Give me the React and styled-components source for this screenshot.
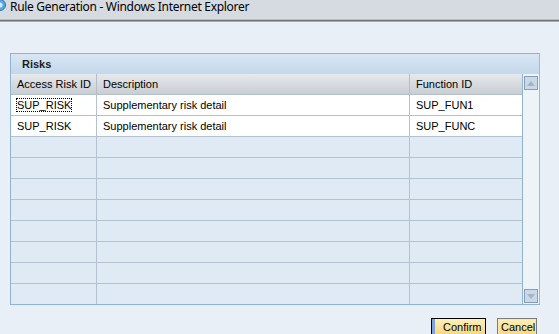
import React from "react";
import styled, { createGlobalStyle } from "styled-components";

const Global = createGlobalStyle`
  html, body { margin: 0; padding: 0; }
  body { width: 559px; height: 334px; overflow: hidden; background: #e8eff7; font-family: "Liberation Sans", Arial, sans-serif; }
`;

const Window = styled.div`
  display: flex;
  flex-direction: column;
  width: 559px;
  height: 334px;
  overflow: hidden;
  background: #e8eff7;
  font-family: "Liberation Sans", Arial, sans-serif;
`;

const TitleBar = styled.div`
  flex-shrink: 0;
  height: 19px;
  display: flex;
  align-items: flex-start;
  gap: 4px;
  background: #d6dbe2;
  font-family: "Noto Sans", "Open Sans", sans-serif;
  font-size: 12px;
  color: #000;
  overflow: hidden;
`;

const TitleText = styled.span`
  line-height: 13px;
  letter-spacing: -0.3px;
  white-space: nowrap;
`;

const Divider = styled.div`
  flex-shrink: 0;
  height: 1px;
  background: ${(p) => p.$c};
`;

const Content = styled.div`
  flex-shrink: 0;
  display: flex;
  flex-direction: column;
  padding: 31px 0 0 10px;
`;

const Panel = styled.div`
  width: 528px;
  border: 1px solid #8fb3d2;
  border-right-color: #a9b9c9;
  display: flex;
  flex-direction: column;
`;

const PanelTitle = styled.div`
  height: 20px;
  line-height: 20px;
  padding-left: 11px;
  font-weight: bold;
  font-size: 11px;
  color: #1c1c1c;
  background: linear-gradient(#d8e6f3, #c3d8eb);
`;

const Body = styled.div`
  display: flex;
`;

const Grid = styled.div`
  display: grid;
  grid-template-columns: 86px 313px 112px;
  border-right: 1px solid #8fb3d2;
`;

const HeadCell = styled.div`
  height: 20px;
  line-height: 20px;
  padding-left: 6px;
  font-size: 11px;
  color: #000;
  white-space: nowrap;
  overflow: hidden;
  background: linear-gradient(#e6e9ec, #c9ced3);
  border-bottom: 1px solid #b4c0cc;
  border-right: ${(p) => (p.$last ? "none" : "1px solid #b4bec8")};
`;

const Cell = styled.div`
  height: 20px;
  line-height: 20px;
  padding-left: 6px;
  font-size: 11px;
  color: #000;
  white-space: nowrap;
  overflow: hidden;
  background: ${(p) => (p.$empty ? "#dfeaf4" : "#ffffff")};
  border-bottom: ${(p) => (p.$lastRow ? "none" : "1px solid #b4c2d0")};
  border-right: ${(p) => (p.$last ? "none" : "1px solid #b4c2d0")};
`;

const Focus = styled.span`
  outline: 1px dotted #000;
  outline-offset: 0px;
`;

const Scroll = styled.div`
  width: 16px;
  background: #eef3f8;
  display: flex;
  flex-direction: column;
  justify-content: space-between;
  align-items: center;
  padding: 2px 0 1px;
`;

const ScrollBtn = styled.div`
  width: 12px;
  height: 12px;
  border: 1px solid #8a9db0;
  background: #c7d9ea;
  display: flex;
  align-items: center;
  justify-content: center;
`;

const Buttons = styled.div`
  display: flex;
  justify-content: flex-end;
  gap: 11px;
  width: 527px;
  margin-top: 13px;
`;

const Button = styled.div`
  box-sizing: border-box;
  width: ${(p) => p.$w}px;
  height: 18px;
  line-height: 16px;
  padding-left: ${(p) => (p.$focus ? "11px" : "3px")};
  font-size: 11px;
  color: #000;
  white-space: nowrap;
  border: 1px solid ${(p) => (p.$focus ? "#000" : "#7c7c7c")};
  background: linear-gradient(#fdf0bd, #f8d57c);
  box-shadow: ${(p) => (p.$focus ? "inset 3px 0 0 #7fa3d8" : "inset 0 0 0 1px #fbe6a6")};
`;

const rows = [
  ["SUP_RISK", "Supplementary risk detail", "SUP_FUN1"],
  ["SUP_RISK", "Supplementary risk detail", "SUP_FUNC"],
];

export default function App() {
  const all = [...rows];
  while (all.length < 10) all.push(null);
  return (
    <Window>
      <Global />
      <TitleBar>
        <svg width="6" height="14" viewBox="0 0 6 14">
          <circle cx="0" cy="5" r="5.5" fill="#5aa7e4" stroke="#2d6fb8" strokeWidth="1" />
          <circle cx="0" cy="5" r="2.5" fill="#d6ecfb" />
        </svg>
        <TitleText>Rule Generation - Windows Internet Explorer</TitleText>
      </TitleBar>
      <Divider $c="#b9bec4" />
      <Divider $c="#6f7275" />
      <Divider $c="#a7abb0" />
      <Content>
        <Panel>
          <PanelTitle>Risks</PanelTitle>
          <Body>
            <Grid>
              <HeadCell>Access Risk ID</HeadCell>
              <HeadCell>Description</HeadCell>
              <HeadCell $last>Function ID</HeadCell>
              {all.map((r, i) =>
                [0, 1, 2].map((c) => (
                  <Cell
                    key={`${i}-${c}`}
                    $empty={!r}
                    $last={c === 2}
                    $lastRow={i === all.length - 1}
                  >
                    {r ? (i === 0 && c === 0 ? <Focus>{r[c]}</Focus> : r[c]) : ""}
                  </Cell>
                ))
              )}
            </Grid>
            <Scroll>
              <ScrollBtn>
                <svg width="8" height="5" viewBox="0 0 8 5">
                  <polygon points="0,5 8,5 4,0" fill="#a9b3bd" />
                </svg>
              </ScrollBtn>
              <ScrollBtn>
                <svg width="8" height="5" viewBox="0 0 8 5">
                  <polygon points="0,0 8,0 4,5" fill="#a9b3bd" />
                </svg>
              </ScrollBtn>
            </Scroll>
          </Body>
        </Panel>
        <Buttons>
          <Button $focus $w={55}>Confirm</Button>
          <Button $w={40}>Cancel</Button>
        </Buttons>
      </Content>
    </Window>
  );
}
